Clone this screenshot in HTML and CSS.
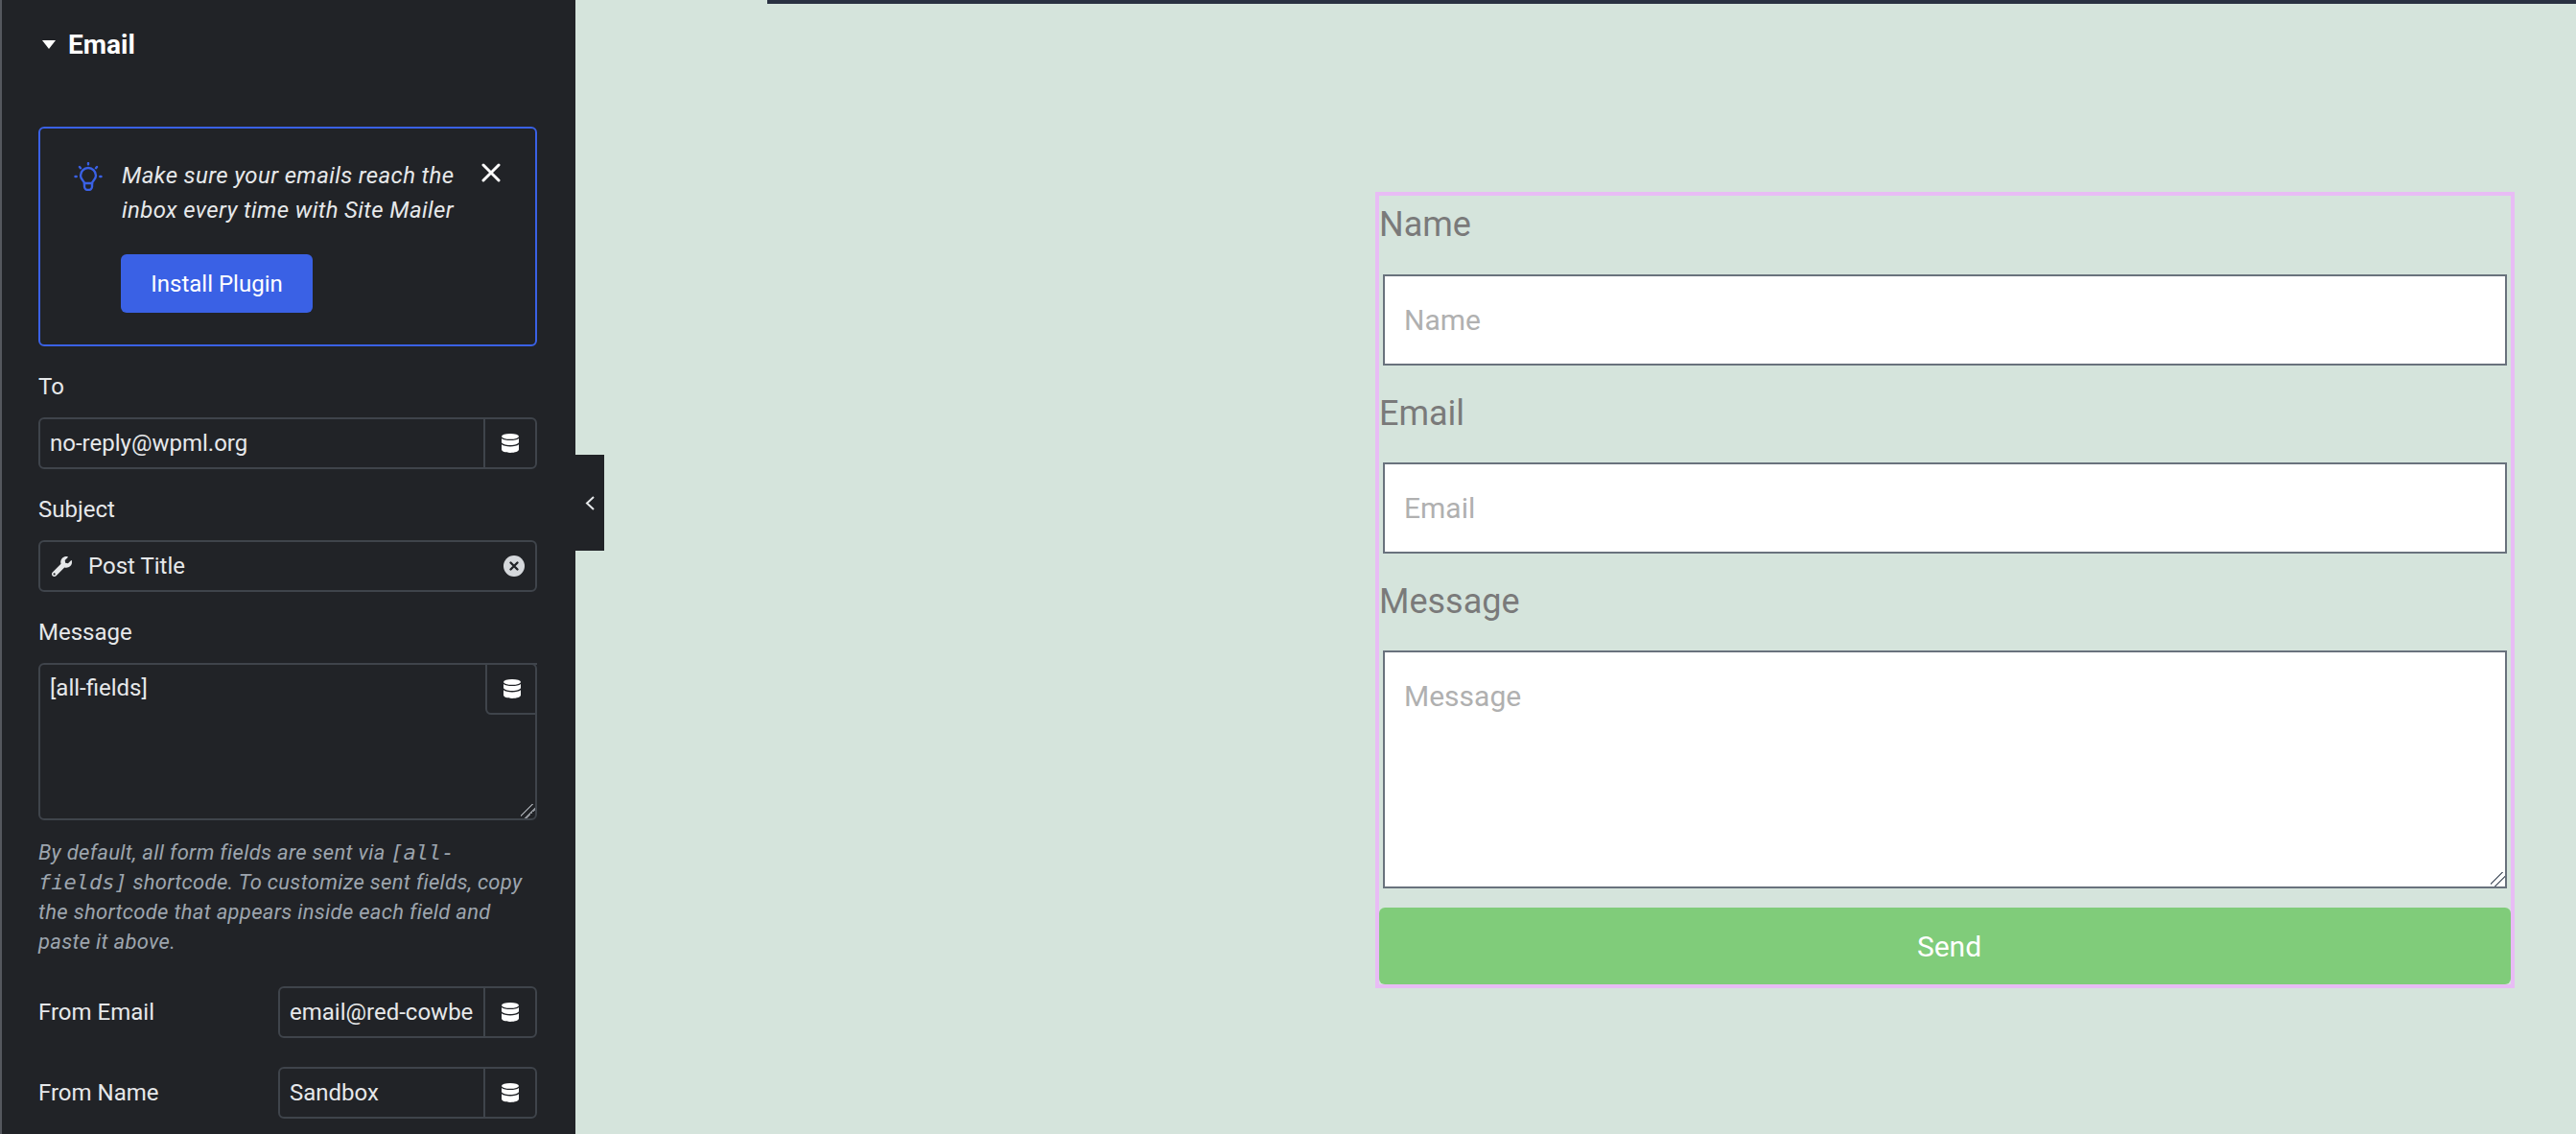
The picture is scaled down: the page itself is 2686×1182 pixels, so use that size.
FILE: index.html
```html
<!DOCTYPE html>
<html>
	<head>
		<meta charset="UTF-8">
		<title>Email form settings</title>
		<link rel="stylesheet" href="styles.css">
	</head>
	<body>
		<svg class="sprites" width="0" height="0">
			<symbol id="db" viewBox="0 0 18 20">
				<ellipse cx="9" cy="2.900" rx="9" ry="2.900"/>
				<path d="M0 4.900C1.600 6.400 5 7 9 7s7.400-.6 9-2.100v3.900c0 1.800-4 3.200-9 3.200S0 10.600 0 8.800z"/>
				<path d="M0 11.300c1.600 1.500 5 2.100 9 2.100s7.400-.6 9-2.100v5.300c0 1.900-4 3.400-9 3.400s-9-1.500-9-3.400z"/>
			</symbol>
		</svg>
		<div class="editor">
			<aside class="panel">
				<h2 class="section-title"><span class="caret"></span>Email</h2>

				<div class="notice">
					<svg class="notice-bulb" viewBox="0 0 30 30" fill="none" stroke="#3a61e5" stroke-width="2.400" stroke-linecap="round">
						<path d="M15 1v1.200M6 5l1 1.200M24 5l-1 1.200M1.500 15h1.200M27.300 15h1.200"/>
						<path d="M11 22c0-2.500-4-3.500-4-8a8 8 0 0 1 16 0c0 4.500-4 5.500-4 8z"/>
						<path d="M11 22v3.500a4 3.500 0 0 0 8 0V22"/>
					</svg>
					<div class="notice-body">
						<p class="notice-text">Make sure your emails reach the inbox every time with Site Mailer</p>
						<button class="notice-btn">Install Plugin</button>
					</div>
					<svg class="notice-close" viewBox="0 0 20 20" stroke="#fff" stroke-width="3" stroke-linecap="round">
						<path d="M2 2l16 16M18 2L2 18"/>
					</svg>
				</div>

				<label class="ctl-label">To</label>
				<div class="ctl">
					<input class="ctl-input" value="no-reply@wpml.org">
					<span class="ctl-db"><svg><use href="#db"/></svg></span>
				</div>

				<label class="ctl-label">Subject</label>
				<div class="ctl ctl-tag">
					<svg class="tag-wrench" viewBox="0 0 512 512">
						<path d="M507.730 109.100c-2.240-9.030-13.540-12.090-20.120-5.510l-74.360 74.360-67.880-11.310-11.310-67.880 74.360-74.360c6.620-6.620 3.430-17.900-5.660-20.160-47.380-11.740-99.550.91-136.580 37.930-39.640 39.640-50.550 97.100-34.050 147.200L18.740 402.760c-24.990 24.990-24.990 65.510 0 90.500 24.990 24.990 65.510 24.990 90.500 0l213.210-213.210c50.120 16.710 107.470 5.680 147.370-34.220 37.070-37.070 49.700-89.320 37.910-136.730z"/>
						<circle cx="64" cy="448" r="26" fill="#212327"/>
					</svg>
					<span class="tag-text">Post Title</span>
					<svg class="tag-clear" viewBox="0 0 22 22">
						<circle cx="11" cy="11" r="11" fill="#d5d8dc"/>
						<path d="M7.500 7.500l7 7M14.500 7.500l-7 7" stroke="#212327" stroke-width="2.400" stroke-linecap="round"/>
					</svg>
				</div>

				<label class="ctl-label">Message</label>
				<div class="ctl-area">
					<textarea class="ctl-textarea">[all-fields]</textarea>
					<span class="ctl-db ctl-db-float"><svg><use href="#db"/></svg></span>
				</div>
				<p class="ctl-desc">By default, all form fields are sent via <code>[all-</code><code>fields]</code> shortcode. To customize sent fields, copy the shortcode that appears inside each field and paste it above.</p>

				<div class="ctl-row">
					<label class="ctl-row-label">From Email</label>
					<div class="ctl ctl-short">
						<input class="ctl-input" value="email@red-cowbell.com">
						<span class="ctl-db"><svg><use href="#db"/></svg></span>
					</div>
				</div>
				<div class="ctl-row">
					<label class="ctl-row-label">From Name</label>
					<div class="ctl ctl-short">
						<input class="ctl-input" value="Sandbox">
						<span class="ctl-db"><svg><use href="#db"/></svg></span>
					</div>
				</div>

				<div class="panel-toggle">
					<svg viewBox="0 0 10 15" fill="none" stroke="#e6e8ea" stroke-width="2"><path d="M9 1L2 7.500 9 14"/></svg>
				</div>
			</aside>

			<main class="canvas">
				<div class="top-line"></div>
				<form class="contact-form">
					<div class="field">
						<label class="field-label">Name</label>
						<input class="field-input" placeholder="Name">
					</div>
					<div class="field">
						<label class="field-label">Email</label>
						<input class="field-input" placeholder="Email">
					</div>
					<div class="field">
						<label class="field-label">Message</label>
						<textarea class="field-input field-area" placeholder="Message"></textarea>
					</div>
					<button class="send-btn" type="button">Send</button>
				</form>
			</main>
		</div>
	</body>
</html>
```

FILE: styles.css
```css
*{
	box-sizing: border-box;
}
html,body{
	margin: 0;
	height: 100%;
	overflow: hidden;
}
body{
	font-family: Roboto, "Liberation Sans", sans-serif;
}
.sprites{
	display: block;
	height: 0;
}
.editor{
	display: flex;
	height: 1182px;
}

/* left panel */
.panel{
	position: relative;
	flex: 0 0 600px;
	padding: 0 40px 0 38px;
	background-color: #212327;
	border-left: 2px solid #55585e;
	color: #e6e8ea;
}
.section-title{
	display: flex;
	align-items: center;
	height: 32px;
	margin: 30px 0 70px 4px;
	font-size: 28px;
	font-weight: 700;
	color: #fff;
}
.caret{
	width: 0;
	height: 0;
	margin-right: 13px;
	border-left: 7px solid transparent;
	border-right: 7px solid transparent;
	border-top: 9px solid #fff;
}
.notice{
	display: flex;
	height: 229px;
	padding: 35px 36px 0 35px;
	border: 2px solid #3a61e5;
	border-radius: 6px;
}
.notice-bulb{
	flex: 0 0 30px;
	height: 30px;
}
.notice-body{
	flex: 1;
	margin-left: 19px;
	margin-top: -4px;
}
.notice-text{
	width: 360px;
	margin: 0 0 28px 1px;
	font-size: 24px;
	font-style: italic;
	letter-spacing: .36px;
	line-height: 36px;
	color: #e6e8ea;
}
.notice-btn{
	display: block;
	width: 200px;
	height: 61px;
	padding: 0;
	border: 0;
	border-radius: 6px;
	background-color: #3a61e5;
	font-family: inherit;
	font-size: 24px;
	color: #fff;
}
.notice-close{
	flex: 0 0 20px;
	height: 20px;
	margin-top: 1px;
}

/* controls */
.ctl-label{
	display: block;
	height: 28px;
	margin: 28px 0 18px;
	font-size: 24px;
	line-height: 28px;
	color: #e6e8ea;
}
.ctl{
	display: flex;
	align-items: center;
	height: 54px;
	border: 2px solid #3f444b;
	border-radius: 6px;
}
.ctl-input{
	flex: 1;
	min-width: 0;
	height: 100%;
	padding: 0 10px;
	border: 0;
	outline: 0;
	background: transparent;
	font-family: inherit;
	font-size: 24px;
	color: #e6e8ea;
}
.ctl-db{
	display: flex;
	align-items: center;
	justify-content: center;
	flex: 0 0 54px;
	height: 100%;
	border-left: 2px solid #3f444b;
}
.ctl-db svg{
	width: 18px;
	height: 20px;
	fill: #fff;
}
.tag-wrench{
	flex: 0 0 21px;
	height: 21px;
	margin-left: 12px;
	fill: #e6e8ea;
}
.tag-text{
	flex: 1;
	margin-left: 17px;
	font-size: 24px;
}
.tag-clear{
	flex: 0 0 22px;
	height: 22px;
	margin-right: 11px;
}
.ctl-area{
	position: relative;
	height: 164px;
}
.ctl-textarea{
	display: block;
	width: 100%;
	height: 100%;
	padding: 10px;
	border: 2px solid #3f444b;
	border-radius: 6px;
	outline: 0;
	background: transparent;
	font-family: inherit;
	font-size: 24px;
	color: #e6e8ea;
}
.ctl-textarea::-webkit-resizer{
	background: linear-gradient(135deg, transparent 37%, #8f9399 37% 44%, transparent 44% 63%, #8f9399 63% 70%, transparent 70%);
}
.ctl-db-float{
	position: absolute;
	top: 0;
	right: 0;
	width: 54px;
	height: 54px;
	border: 2px solid #3f444b;
	border-right: 0;
	border-bottom-left-radius: 6px;
}
.ctl-desc{
	height: 124px;
	margin: 18px 0 31px 0;
	font-size: 22px;
	font-style: italic;
	letter-spacing: .3px;
	line-height: 31px;
	color: #9da5ae;
}
.ctl-desc code{
	font-family: "DejaVu Sans Mono", "Liberation Mono", monospace;
	font-size: 22px;
	letter-spacing: 0;
	line-height: 1;
}
.ctl-row{
	display: flex;
	align-items: center;
	justify-content: space-between;
	margin-bottom: 30px;
}
.ctl-row-label{
	font-size: 24px;
	color: #e6e8ea;
}
.ctl-short{
	width: 270px;
}
.panel-toggle{
	position: absolute;
	top: 474px;
	left: 598px;
	display: flex;
	align-items: center;
	width: 30px;
	height: 100px;
	padding-left: 10px;
	background-color: #212327;
}
.panel-toggle svg{
	width: 10px;
	height: 15px;
}

/* preview area */
.canvas{
	flex: 1;
	background-color: #d5e4dc;
}
.top-line{
	height: 4px;
	margin-left: 200px;
	background-color: #2a3142;
}
.contact-form{
	width: 1188px;
	height: 830px;
	margin: 196px 0 0 834px;
	border: 4px solid #e8bcf5;
}
.field{
	margin-bottom: 19px;
}
.field:last-of-type{
	margin-bottom: 20px;
}
.field + .field{
	padding-top: 1px;
}
.field-label{
	display: block;
	height: 60px;
	margin-bottom: 22px;
	font-size: 36px;
	line-height: 60px;
	color: #7a7a7a;
}
.field + .field .field-label{
	margin-bottom: 21px;
}
.field-input{
	display: block;
	width: 1172px;
	height: 95px;
	margin: 0 4px;
	padding: 0 20px;
	border: 2px solid #69727d;
	border-radius: 0;
	outline: 0;
	background-color: #fff;
	font-family: inherit;
	font-size: 30px;
	color: #333;
}
.field-input::placeholder{
	color: #b0b0b0;
	opacity: 1;
}
.field-area{
	height: 248px;
	padding: 28px 20px 20px;
}
.field-area::-webkit-resizer{
	background: linear-gradient(135deg, transparent 37%, #69727d 37% 44%, transparent 44% 63%, #69727d 63% 70%, transparent 70%);
}
.send-btn{
	display: block;
	width: 1180px;
	height: 80px;
	padding: 0 0 0 9px;
	border: 0;
	border-radius: 6px;
	background-color: #80cc7a;
	font-family: inherit;
	font-size: 30px;
	color: #fff;
}
```
